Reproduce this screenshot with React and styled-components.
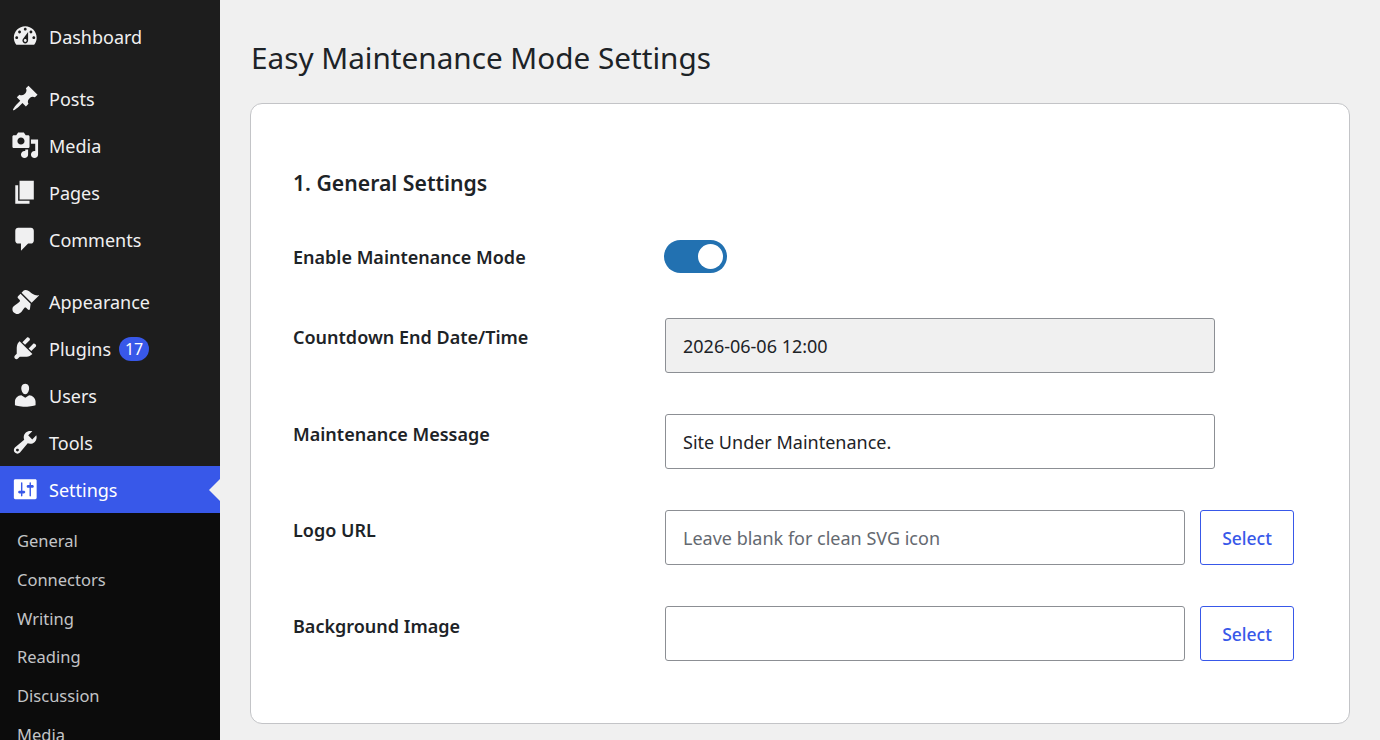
import React from 'react';
import styled, { createGlobalStyle } from 'styled-components';

const GlobalStyle = createGlobalStyle`
  html, body {
    margin: 0;
    padding: 0;
    height: 100%;
    overflow: hidden;
    background: #f0f0f0;
    font-family: "Noto Sans", "Open Sans", sans-serif;
  }
  * {
    box-sizing: border-box;
  }
`;

const Page = styled.div`
  display: flex;
  width: 100%;
  height: 740px;
  overflow: hidden;
`;

const Sidebar = styled.nav`
  width: 220px;
  flex-shrink: 0;
  background: #1d1d1d;
  padding-top: 13px;
`;

const MenuGroup = styled.div`
  margin-bottom: 15px;
`;

const MenuItem = styled.div`
  position: relative;
  display: flex;
  align-items: center;
  height: 47px;
  padding-left: 10.5px;
  font-size: 18px;
  color: ${(p) => (p.$active ? '#fff' : '#f0f0f1')};
  background: ${(p) => (p.$active ? '#3858e9' : 'transparent')};

  ${(p) =>
    p.$active &&
    `&::after {
      content: '';
      position: absolute;
      right: 0;
      top: 50%;
      margin-top: -11px;
      border: 11px solid transparent;
      border-right-color: #f0f0f0;
      border-left-width: 0;
    }`}
`;

const MenuIcon = styled.svg`
  width: 28.5px;
  height: 28.5px;
  margin-right: 10px;
  fill: ${(p) => (p.$active ? '#fff' : '#f0f0f1')};
  flex-shrink: 0;
`;

const Badge = styled.span`
  display: inline-flex;
  align-items: center;
  justify-content: center;
  width: 30px;
  height: 24px;
  margin-left: 8px;
  border-radius: 12px;
  background: #3858e9;
  color: #fff;
  font-size: 16px;
`;

const SubMenu = styled.div`
  background: #0c0c0c;
  padding-top: 8.4px;
  height: 300px;
`;

const SubItem = styled.div`
  height: 38.7px;
  padding-left: 17px;
  display: flex;
  align-items: center;
  font-size: 16.5px;
  color: #c3c4c7;
`;

const Main = styled.main`
  flex: 1;
  padding: 0 30px;
`;

const Title = styled.h1`
  margin: 0;
  height: 103px;
  padding-top: 34px;
  padding-left: 1px;
  font-size: 29.7px;
  font-weight: 400;
  line-height: 48px;
  color: #1d2327;
`;

const Card = styled.section`
  height: 621px;
  background: #fff;
  border: 1px solid #c3c4c7;
  border-radius: 12px;
  padding: 64px 42px 0;
`;

const SectionTitle = styled.h2`
  margin: 0 0 42px;
  height: 30px;
  font-size: 21.2px;
  font-weight: 600;
  line-height: 30px;
  color: #1d2327;
`;

const Row = styled.div`
  display: grid;
  grid-template-columns: 372px 1fr;
  margin-bottom: ${(p) => p.$gap || 41}px;
`;

const Label = styled.label`
  padding-top: ${(p) => p.$top || 7}px;
  font-size: 18px;
  font-weight: 600;
  line-height: 24px;
  color: #1d2327;
`;

const Field = styled.div`
  display: flex;
  gap: 15px;
`;

const Input = styled.input`
  width: ${(p) => p.$width || 550}px;
  height: 55px;
  padding: 0 17px;
  border: 1px solid #8c8f94;
  border-radius: 3px;
  font-family: inherit;
  font-size: 18px;
  color: #1d2327;
  background: ${(p) => (p.$filled ? '#f0f0f0' : '#fff')};

  &::placeholder {
    color: #646970;
    opacity: 1;
  }
`;

const SelectButton = styled.button`
  width: 94px;
  height: 55px;
  padding: 0;
  background: #fff;
  border: 1px solid #3858e9;
  border-radius: 3px;
  font-family: inherit;
  font-size: 17.5px;
  font-weight: 500;
  color: #3858e9;
`;

const Toggle = styled.span`
  display: block;
  position: relative;
  width: 63px;
  height: 33px;
  margin-left: -1px;
  border-radius: 17px;
  background: #2271b1;

  &::after {
    content: '';
    position: absolute;
    top: 4px;
    right: 4px;
    width: 25px;
    height: 25px;
    border-radius: 50%;
    background: #fff;
  }
`;

const icons = {
  dashboard:
    'M3.76 16h12.48c1.1-1.37 1.76-3.11 1.76-5 0-4.42-3.58-8-8-8s-8 3.58-8 8c0 1.89.66 3.63 1.76 5zM10 4c.55 0 1 .45 1 1s-.45 1-1 1-1-.45-1-1 .45-1 1-1zM6 6c.55 0 1 .45 1 1s-.45 1-1 1-1-.45-1-1 .45-1 1-1zm8 0c.55 0 1 .45 1 1s-.45 1-1 1-1-.45-1-1 .45-1 1-1zm-5.37 5.55L12 7v6c0 1.1-.9 2-2 2s-2-.9-2-2c0-.57.24-1.08.63-1.45zM4 10c.55 0 1 .45 1 1s-.45 1-1 1-1-.45-1-1 .45-1 1-1zm12 0c.55 0 1 .45 1 1s-.45 1-1 1-1-.45-1-1 .45-1 1-1zm-5 3c0-.55-.45-1-1-1s-1 .45-1 1 .45 1 1 1 1-.45 1-1z',
  posts:
    'M10.44 3.02l1.82-1.82 6.36 6.35-1.83 1.82c-1.05-.68-2.48-.57-3.41.36l-.75.75c-.92.93-1.04 2.35-.35 3.41l-1.83 1.82-2.41-2.41-2.8 2.79c-.42.42-3.38 2.71-3.8 2.29s1.86-3.39 2.28-3.81l2.79-2.79L4.1 9.36l1.83-1.82c1.05.69 2.48.57 3.4-.36l.75-.75c.93-.92 1.05-2.35.36-3.41z',
  media:
    'M13 11V4c0-.55-.45-1-1-1h-1.67L9 1H5L3.67 3H2c-.55 0-1 .45-1 1v7c0 .55.45 1 1 1h10c.55 0 1-.45 1-1zM7 4.5c1.38 0 2.5 1.12 2.5 2.5S8.38 9.5 7 9.5 4.5 8.38 4.5 7 5.62 4.5 7 4.5zM14 6h5v10.5c0 1.38-1.12 2.5-2.5 2.5S14 17.88 14 16.5s1.12-2.5 2.5-2.5c.17 0 .34.02.5.05V9h-3V6zm-4 8.05V13h2v3.5c0 1.38-1.12 2.5-2.5 2.5S7 17.88 7 16.5 8.12 14 9.5 14c.17 0 .34.02.5.05z',
  pages: 'M6 15V2h10v13H6zm-1 1h8v2H3V5h2v11z',
  comments:
    'M5 2h9c1.1 0 2 .9 2 2v7c0 1.1-.9 2-2 2h-2l-5 5v-5H5c-1.1 0-2-.9-2-2V4c0-1.1.9-2 2-2z',
  appearance:
    'M14.48 11.06L7.41 3.99l1.5-1.5c.5-.56 2.3-.47 3.51.32 1.21.8 1.43 1.28 2.91 2.1 1.18.64 2.45 1.26 4.45.85zm-.71.71L6.7 4.7 4.93 6.47c-.39.39-.39 1.02 0 1.41l1.06 1.06c.39.39.39 1.03 0 1.42-.6.6-1.43 1.11-2.21 1.69-.35.26-.7.53-1.01.84C1.43 13.71 1 14.65 1 15.54c0 .89.43 1.83 1.01 2.41.58.58 1.52 1.05 2.41 1.05.89 0 1.84-.47 2.41-1.05.31-.31.58-.66.84-1.01.58-.78 1.09-1.61 1.69-2.21.39-.39 1.03-.39 1.42 0l1.06 1.06c.39.39 1.02.39 1.41 0z',
  plugins:
    'M13.11 4.36L9.87 7.6 8 5.73l3.24-3.24c.35-.34 1.05-.2 1.56.32.52.51.66 1.21.31 1.55zm-8 1.77l.91-1.12 9.01 9.01-1.19.84c-.71.71-2.63 1.16-3.82 1.16H6.14L4.9 17.26c-.59.59-1.54.59-2.12 0-.59-.58-.59-1.53 0-2.12l1.24-1.24v-3.88c0-1.13.4-3.19 1.09-3.89zm7.26 3.97l3.24-3.24c.34-.35 1.04-.21 1.55.31.52.51.66 1.21.31 1.55l-3.24 3.25z',
  users:
    'M10 9.25c-2.27 0-2.73-3.44-2.73-3.44C7 4.02 7.82 2 9.97 2c2.16 0 2.98 2.02 2.71 3.81 0 0-.41 3.44-2.68 3.44zm0 2.57L12.72 10c2.39 0 4.52 2.33 4.52 4.53v2.49s-3.65 1.13-7.24 1.13c-3.65 0-7.24-1.13-7.24-1.13v-2.49c0-2.25 1.94-4.48 4.47-4.48z',
  tools:
    'M16.68 9.77c-1.34 1.34-3.3 1.67-4.95.99l-5.41 6.52c-.99.99-2.59.99-3.58 0s-.99-2.59 0-3.57l6.52-5.42c-.68-1.65-.35-3.61.99-4.95 1.28-1.28 3.12-1.62 4.72-1.06l-2.89 2.89 2.82 2.82 2.86-2.87c.53 1.58.18 3.39-1.08 4.65zM3.81 16.21c.4.39 1.04.39 1.43 0 .4-.4.4-1.04 0-1.43-.39-.4-1.03-.4-1.43 0-.39.39-.39 1.03 0 1.43z',
  settings:
    'M18 16V4c0-.55-.45-1-1-1H3c-.55 0-1 .45-1 1v12c0 .55.45 1 1 1h14c.55 0 1-.45 1-1zM8 11h1c.55 0 1 .45 1 1s-.45 1-1 1H8v1.5c0 .28-.22.5-.5.5s-.5-.22-.5-.5V13H6c-.55 0-1-.45-1-1s.45-1 1-1h1V5.5c0-.28.22-.5.5-.5s.5.22.5.5V11zm5-2h-1c-.55 0-1-.45-1-1s.45-1 1-1h1V5.5c0-.28.22-.5.5-.5s.5.22.5.5V7h1c.55 0 1 .45 1 1s-.45 1-1 1h-1v5.5c0 .28-.22.5-.5.5s-.5-.22-.5-.5V9z',
};

const menuGroups = [
  [{ icon: 'dashboard', label: 'Dashboard' }],
  [
    { icon: 'posts', label: 'Posts' },
    { icon: 'media', label: 'Media' },
    { icon: 'pages', label: 'Pages' },
    { icon: 'comments', label: 'Comments' },
  ],
  [
    { icon: 'appearance', label: 'Appearance' },
    { icon: 'plugins', label: 'Plugins', badge: 17 },
    { icon: 'users', label: 'Users' },
    { icon: 'tools', label: 'Tools' },
    { icon: 'settings', label: 'Settings', active: true },
  ],
];

const subItems = ['General', 'Connectors', 'Writing', 'Reading', 'Discussion', 'Media'];

const App = () => {
  return (
    <Page>
      <GlobalStyle />
      <Sidebar>
        {menuGroups.map((group, index) => (
          <MenuGroup key={index}>
            {group.map((item) => (
              <MenuItem key={item.label} $active={item.active}>
                <MenuIcon viewBox="0 0 20 20" $active={item.active}>
                  <path fillRule="evenodd" d={icons[item.icon]} />
                </MenuIcon>
                {item.label}
                {item.badge && <Badge>{item.badge}</Badge>}
              </MenuItem>
            ))}
            {index === 2 && (
              <SubMenu>
                {subItems.map((sub) => (
                  <SubItem key={sub}>{sub}</SubItem>
                ))}
              </SubMenu>
            )}
          </MenuGroup>
        ))}
      </Sidebar>
      <Main>
        <Title>Easy Maintenance Mode Settings</Title>
        <Card>
          <SectionTitle>1. General Settings</SectionTitle>
          <Row $gap={45}>
            <Label $top={5}>Enable Maintenance Mode</Label>
            <Field>
              <Toggle />
            </Field>
          </Row>
          <Row>
            <Label>Countdown End Date/Time</Label>
            <Field>
              <Input $filled readOnly value="2026-06-06 12:00" />
            </Field>
          </Row>
          <Row>
            <Label $top={8}>Maintenance Message</Label>
            <Field>
              <Input readOnly value="Site Under Maintenance." />
            </Field>
          </Row>
          <Row>
            <Label $top={8}>Logo URL</Label>
            <Field>
              <Input $width={520} placeholder="Leave blank for clean SVG icon" />
              <SelectButton>Select</SelectButton>
            </Field>
          </Row>
          <Row>
            <Label $top={8}>Background Image</Label>
            <Field>
              <Input $width={520} />
              <SelectButton>Select</SelectButton>
            </Field>
          </Row>
        </Card>
      </Main>
    </Page>
  );
};

export default App;
